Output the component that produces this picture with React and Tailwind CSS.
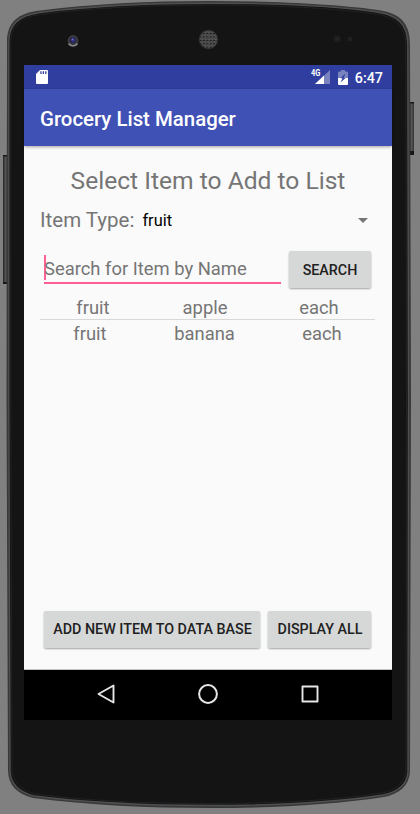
import React from "react";

function PhoneBody() {
  return (
    <svg className="absolute inset-0" width="420" height="814" viewBox="0 0 420 814" aria-hidden="true">
      <defs>
        <pattern id="mesh" width="3.4" height="3.4" patternUnits="userSpaceOnUse">
          <rect width="3.4" height="3.4" fill="#181818" />
          <path d="M0 0H3.4M0 0V1.7M1.7 1.7V3.4M0 1.7H3.4" stroke="#808080" strokeWidth="0.7" />
        </pattern>
        <linearGradient id="key" x1="0" x2="1">
          <stop offset="0" stopColor="#222" />
          <stop offset="0.5" stopColor="#555" />
          <stop offset="1" stopColor="#333" />
        </linearGradient>
      </defs>
      <rect x="3" y="155" width="5" height="129" fill="url(#key)" />
      <rect x="3" y="155" width="4" height="1.5" fill="#181818" />
      <rect x="3" y="282" width="4" height="2" fill="#181818" />
      <rect x="409" y="102" width="5" height="53" fill="url(#key)" />
      <rect x="410" y="102" width="4" height="1.5" fill="#181818" />
      <rect x="410" y="151" width="4" height="4" fill="#181818" />
      <path
        d="M7 42C7 22 18 13 40 10.500C90 4 150 1 209 1C270 1 335 4 378 10C400 13 410 23 410 44L411 400L410 772C409 786 399 794 384 797C330 805 270 808 210 808C145 808 90 805 33 798C17 794 8 785 8 770L6.500 400Z"
        fill="#38393b"
      />
      <path
        d="M8.800 42C8.800 24 19 15.500 40 12.500C90 6 150 3.200 209 3.200C270 3.200 335 6 377 12C398 15 407.500 25 407.800 44L408.500 400L408 772C407 784 398 792 383 795C330 803 270 805.500 210 805.500C145 805.500 90 803 34 796C19 792 10 783 10 770L8.800 400Z"
        fill="#141414"
        stroke="#4e4f51"
        strokeWidth="1.400"
      />
      <path
        d="M10.800 42C10.800 26 21 17 41 14.500C90 8 150 5 209 5C270 5 335 8 376 14C396 17 405.500 27 405.800 44L406.500 400L406 771C405 782 397 790 382 793C330 801 270 803.500 210 803.500C145 803.500 90 801 35 794C21 790 12 781 12 769L10.800 400Z"
        fill="#141414"
        stroke="#222223"
        strokeWidth="1"
      />
      <circle cx="73" cy="40.500" r="5.400" fill="#3c3c3e" />
      <path d="M68.500 43.500A5.400 5.400 0 0 0 77.500 43.500" fill="none" stroke="#8a8a8c" strokeWidth="1.500" />
      <circle cx="73" cy="40.300" r="3.300" fill="#2a2a48" />
      <circle cx="73" cy="40" r="1.700" fill="#3436a4" />
      <circle cx="72.300" cy="39.300" r="0.700" fill="#8084bd" />
      <circle cx="208.500" cy="39.500" r="9.300" fill="url(#mesh)" stroke="#303030" strokeWidth="0.800" />
      <circle cx="337" cy="39" r="3.600" fill="#1e1e1e" />
      <circle cx="337" cy="39" r="1.800" fill="#242424" />
      <circle cx="350" cy="39" r="2.500" fill="#202020" />
    </svg>
  );
}

function StatusBar() {
  return (
    <div className="flex h-6 shrink-0 items-center bg-[#303f9f] pl-3 pr-[9px] text-white">
      <svg width="12" height="14" viewBox="0 0 12 14">
        <path d="M4 0H11Q12 0 12 1V13Q12 14 11 14H1Q0 14 0 13V4Z" fill="#fff" />
        <path d="M5 1.300V4.100M7.400 1.300V4.100M9.800 1.300V4.100" stroke="#303f9f" strokeWidth="1.300" />
      </svg>
      <div className="relative ml-auto h-[14px] w-[18px]">
        <svg className="absolute right-0 top-0" width="15" height="14" viewBox="0 0 15 14">
          <path d="M15 0V14H0Z" fill="#7983c0" />
          <path d="M9 5.600V14H0Z" fill="#fff" />
        </svg>
        <span className="absolute left-[-1px] top-0 origin-left scale-x-[0.88] text-[8.500px] font-bold leading-[7px]">4G</span>
      </div>
      <svg className="ml-2" width="10" height="15" viewBox="0 0 10 15">
        <path d="M3 0H7V1.500H9Q10 1.500 10 2.500V8H0V2.500Q0 1.500 1 1.500H3Z" fill="#7983c0" />
        <path d="M0 8H10V14Q10 15 9 15H1Q0 15 0 14Z" fill="#fff" />
        <path d="M7.500 3.500L2.500 8.200H4.500L2.500 12.500L7.500 8H5.500Z" fill="#303f9f" />
      </svg>
      <span className="ml-[7px] mt-px text-[14.300px] font-medium leading-6">6:47</span>
    </div>
  );
}

function RaisedButton({ className, children }) {
  return (
    <button
      className={
        "flex h-[37px] shrink-0 items-center justify-center rounded-[2px] bg-[#d6d7d7] text-[14.300px] font-medium text-[#212121] shadow-[0_1px_2px_rgba(0,0,0,0.35)] " +
        className
      }
    >
      {children}
    </button>
  );
}

export default function App() {
  return (
    <div className="relative h-[814px] w-[420px] overflow-hidden bg-[#808080] font-[Roboto,'Liberation_Sans',sans-serif]">
      <PhoneBody />
      <div className="relative pl-6 pt-[65px]">
        <main className="flex h-[655px] w-[368px] flex-col bg-[#fafafa]">
          <StatusBar />
          <header className="z-10 flex h-[57px] shrink-0 items-center bg-[#3f51b5] pl-4 pt-[3px] text-[20.400px] font-medium text-white shadow-[0_1px_3px_rgba(0,0,0,0.35)]">
            <h1 className="whitespace-nowrap">Grocery List Manager</h1>
          </header>
          <section className="flex grow flex-col border-b border-[#c4c4c4] px-4 text-[#757575]">
            <h2 className="mt-[18px] whitespace-nowrap text-center text-[24.600px] leading-[34px]">
              Select Item to Add to List
            </h2>
            <div className="mt-[8px] flex h-7 items-center">
              <span className="whitespace-nowrap text-[20.500px]">Item Type:</span>
              <span className="ml-2 mt-[3px] text-[16.400px] text-black">fruit</span>
              <svg className="ml-auto mr-2" width="10" height="5" viewBox="0 0 10 5">
                <path d="M0 0H10L5 5Z" fill="#757575" />
              </svg>
            </div>
            <div className="mt-[17px] flex pl-1 pr-1">
              <div className="relative flex h-[33px] w-[237px] items-center border-b-2 border-[#ff5f95]">
                <span className="absolute left-0 top-[4px] h-[25px] w-[2px] bg-[#ff5f95]" />
                <span className="relative mt-[5px] whitespace-nowrap text-[18.400px]">Search for Item by Name</span>
              </div>
              <RaisedButton className="ml-2 w-[82px] pt-[2px]">SEARCH</RaisedButton>
            </div>
            <div className="mr-px mt-[7px] flex h-[25px] items-center border-b border-[#d8d8d8] pt-[2px] text-[18.400px]">
              <span className="w-[106px] text-center">fruit</span>
              <span className="w-[118px] text-center">apple</span>
              <span className="w-[110px] text-center">each</span>
            </div>
            <div className="flex h-[27px] items-center text-[18.400px]">
              <span className="w-[100px] text-center">fruit</span>
              <span className="w-[129px] text-center">banana</span>
              <span className="w-[106px] text-center">each</span>
            </div>
            <div className="mb-[21px] mt-auto flex gap-2 px-1">
              <RaisedButton className="w-[216px] pl-px">ADD NEW ITEM TO DATA BASE</RaisedButton>
              <RaisedButton className="w-[103px] pl-px">DISPLAY ALL</RaisedButton>
            </div>
          </section>
          <nav className="flex h-[50px] shrink-0 items-center justify-center gap-[83px] bg-black pb-[2px]">
            <svg width="18" height="20" viewBox="0 0 18 20" fill="none" stroke="#e6e6e6" strokeWidth="1.900" strokeLinejoin="round">
              <path d="M16.500 1.500V18.500L1.500 10Z" />
            </svg>
            <svg width="20" height="20" viewBox="0 0 20 20" fill="none" stroke="#e6e6e6" strokeWidth="2">
              <circle cx="10" cy="10" r="8.900" />
            </svg>
            <svg width="18" height="18" viewBox="0 0 18 18" fill="none" stroke="#e6e6e6" strokeWidth="1.900" strokeLinejoin="round">
              <path d="M1.500 1.500H16.500V16.500H1.500Z" />
            </svg>
          </nav>
        </main>
      </div>
    </div>
  );
}
